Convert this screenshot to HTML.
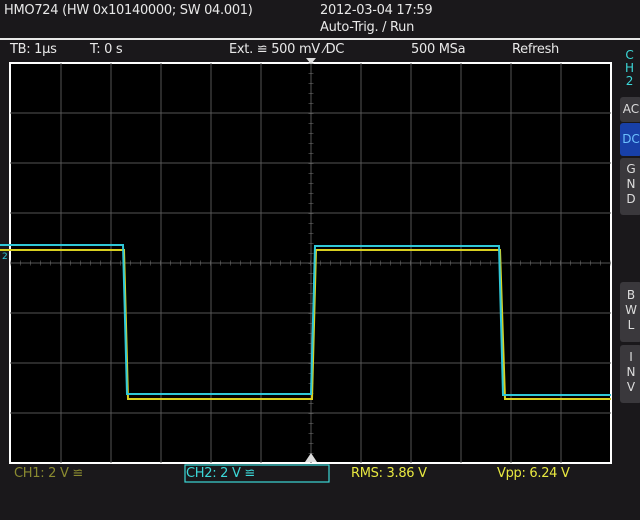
<!DOCTYPE html><html><head><style>
body{margin:0;width:640px;height:520px;background:#1a181b;position:relative;overflow:hidden;font-family:"DejaVu Sans","Liberation Sans",sans-serif;font-size:13px;color:#e8e8e8}
.t{position:absolute;white-space:nowrap;letter-spacing:-0.3px}
.btn{position:absolute;left:620px;width:22px;background:#3a383c;border-radius:3px;color:#ddd;font-size:12px;text-align:center;line-height:15px}
</style></head><body>
<div class="t" style="left:4px;top:3px">HMO724 (HW 0x10140000; SW 04.001)</div>
<div class="t" style="left:320px;top:3px">2012-03-04 17:59</div>
<div class="t" style="left:320px;top:20px">Auto-Trig. / Run</div>
<div style="position:absolute;left:0;top:38px;width:640px;height:2px;background:#e8e8e8"></div>
<div class="t" style="left:10px;top:42px">TB: 1µs</div>
<div class="t" style="left:90px;top:42px">T: 0 s</div>
<div class="t" style="left:229px;top:42px">Ext. ≌ 500 mV ⁄DC</div>
<div class="t" style="left:411px;top:42px">500 MSa</div>
<div class="t" style="left:512px;top:42px">Refresh</div>
<div class="t" style="left:625px;top:49px;color:#3cd8d8;font-size:12px;line-height:13px;text-align:center">C<br>H<br>2</div>
<div class="btn" style="top:97px;height:25px;line-height:25px">AC</div>
<div class="btn" style="top:123px;height:33px;line-height:33px;background:#1840a8;color:#6cc0ff">DC</div>
<div class="btn" style="top:158px;height:57px;padding-top:4px;box-sizing:border-box">G<br>N<br>D</div>
<div class="btn" style="top:282px;height:60px;padding-top:6px;box-sizing:border-box">B<br>W<br>L</div>
<div class="btn" style="top:345px;height:58px;padding-top:5px;box-sizing:border-box">I<br>N<br>V</div>
<svg style="position:absolute;left:0;top:0" width="640" height="520">
<rect x="10" y="63" width="601" height="400" fill="#000" stroke="#fff" stroke-width="2"/>
<g stroke="#555" stroke-width="1">
<path d="M61 63V463M111 63V463M161 63V463M211 63V463M261 63V463M311 63V463M361 63V463M411 63V463M461 63V463M511 63V463M561 63V463"/>
<path d="M10 113H611M10 163H611M10 213H611M10 263H611M10 313H611M10 363H611M10 413H611"/>
</g>
<path d="M10 263H611M311 63V463" stroke="#777" stroke-dasharray="1 9" stroke-width="5" opacity="0.5"/>
<path d="M0 250H124L128 399H312L316 250H500L505 399H611" fill="none" stroke="#d8d020" stroke-width="2"/>
<path d="M0 245H123L127 394H311L315 246H499L503 395H611" fill="none" stroke="#30c8d8" stroke-width="2"/>
<path d="M306 58h10l-5 6z" fill="#ddd"/><path d="M305 462h12l-6-9z" fill="#ddd"/>
<text x="2" y="259" fill="#30c8d8" font-size="9">2</text>
<rect x="185" y="465" width="144" height="17" fill="none" stroke="#3cd8d8" stroke-width="1.2"/>
</svg>
<div class="t" style="left:14px;top:466px;color:#8a8a30">CH1: 2 V ≌</div>
<div class="t" style="left:186px;top:466px;color:#3cd8d8">CH2: 2 V ≌</div>
<div class="t" style="left:351px;top:466px;color:#e8e840">RMS: 3.86 V</div>
<div class="t" style="left:497px;top:466px;color:#e8e840">Vpp: 6.24 V</div>
</body></html>
